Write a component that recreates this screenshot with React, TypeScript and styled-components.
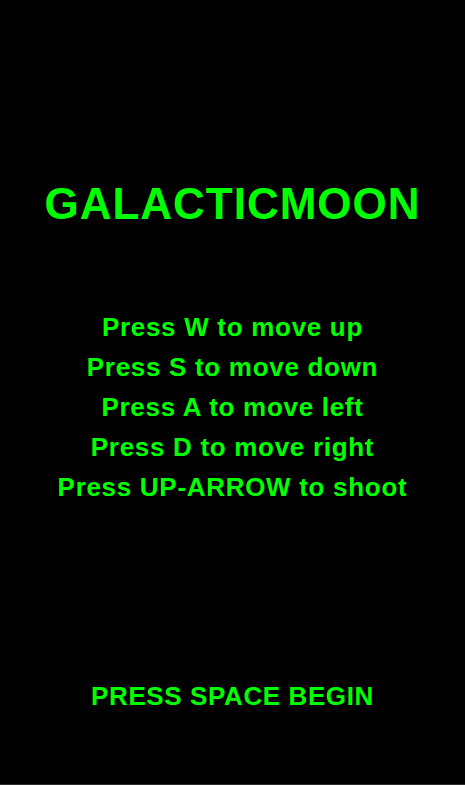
import React from "react";
import styled, { createGlobalStyle } from "styled-components";

const Global = createGlobalStyle`
  html, body {
    margin: 0;
    padding: 0;
    background: #000;
  }
  body {
    font-family: "Liberation Sans", Arial, sans-serif;
  }
`;

const Screen = styled.div`
  width: 465px;
  height: 784px;
  background: #000;
  display: flex;
  flex-direction: column;
  align-items: center;
  padding-top: 182px;
  box-sizing: border-box;
  color: #00ff00;
  font-family: "Liberation Sans", Arial, sans-serif;
  font-weight: bold;
`;

const Title = styled.h1`
  margin: 0;
  font-size: 44px;
  line-height: 44px;
  letter-spacing: 1px;
  font-weight: bold;
`;

const Instructions = styled.div`
  margin-top: 81px;
  display: flex;
  flex-direction: column;
  align-items: center;
`;

const Line = styled.div`
  font-size: 26px;
  line-height: 40px;
  letter-spacing: 0.7px;
  white-space: nowrap;
`;

const Prompt = styled.div`
  margin-top: 169px;
  font-size: 26px;
  line-height: 40px;
  letter-spacing: 0.6px;
`;

const BottomEdge = styled.div`
  width: 465px;
  height: 1px;
  background: #2d2d2d;
`;

const lines = [
  "Press W to move up",
  "Press S to move down",
  "Press A to move left",
  "Press D to move right",
  "Press UP-ARROW to shoot",
];

export default function App() {
  return (
    <>
      <Global />
      <Screen>
        <Title>GALACTICMOON</Title>
        <Instructions>
          {lines.map((l) => (
            <Line key={l}>{l}</Line>
          ))}
        </Instructions>
        <Prompt>PRESS SPACE BEGIN</Prompt>
      </Screen>
      <BottomEdge />
    </>
  );
}
